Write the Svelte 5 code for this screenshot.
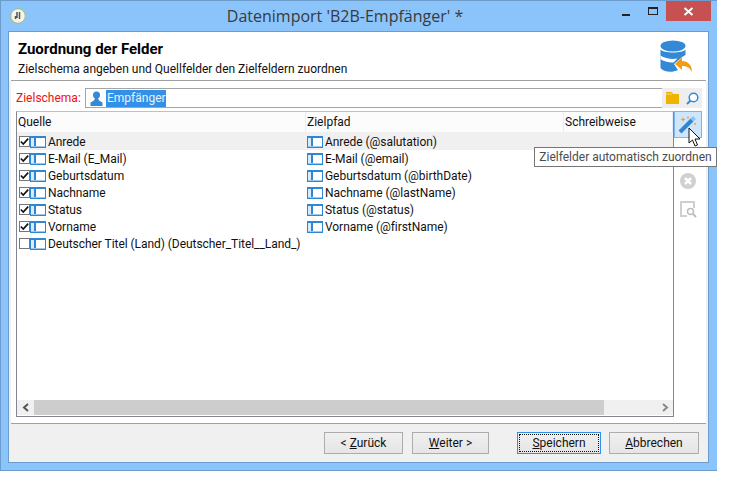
<script>
	const rows = [
		{ source: 'Anrede', target: 'Anrede (@salutation)', checked: true, active: true },
		{ source: 'E-Mail (E_Mail)', target: 'E-Mail (@email)', checked: true },
		{ source: 'Geburtsdatum', target: 'Geburtsdatum (@birthDate)', checked: true },
		{ source: 'Nachname', target: 'Nachname (@lastName)', checked: true },
		{ source: 'Status', target: 'Status (@status)', checked: true },
		{ source: 'Vorname', target: 'Vorname (@firstName)', checked: true },
		{ source: 'Deutscher Titel (Land) (Deutscher_Titel__Land_)', target: '', checked: false }
	];
</script>

{#snippet fieldIcon()}
	<svg class="field-icon" width="16" height="12" viewBox="0 0 16 12" aria-hidden="true">
		<rect x="0" y="0" width="16" height="12" fill="#2f86d4" />
		<rect x="1" y="2" width="3" height="8" fill="#dcebf9" />
		<rect x="6" y="2" width="9" height="8" fill="#fff" />
		<rect x="1" y="10" width="14" height="1" fill="#9cc7ec" />
	</svg>
{/snippet}

<div class="window">
	<header class="titlebar">
		<span class="app-icon">
			<svg width="16" height="16" viewBox="0 0 16 16" aria-hidden="true">
				<circle cx="8" cy="8" r="7.3" fill="#f4f4ea" stroke="#a5bd6a" />
				<path d="M7 4v6M9.500 4v7M5.500 8v3" stroke="#555" stroke-width="1.500" fill="none" />
			</svg>
		</span>
		<span class="title">Datenimport 'B2B-Empfänger' *</span>
		<div class="controls">
			<span class="minimize"></span>
			<span class="maximize"></span>
			<span class="close">
				<svg width="11" height="9" viewBox="0 0 11 9" aria-hidden="true">
					<path d="M1.500 1l8 7M9.500 1l-8 7" stroke="#fff" stroke-width="2" fill="none" />
				</svg>
			</span>
		</div>
	</header>

	<div class="dialog">
		<section class="head">
			<div>
				<h1>Zuordnung der Felder</h1>
				<p>Zielschema angeben und Quellfelder den Zielfeldern zuordnen</p>
			</div>
			<svg class="db-icon" width="34" height="34" viewBox="0 0 34 34" aria-hidden="true">
				<ellipse cx="13" cy="6" rx="12.500" ry="5.500" fill="#3389d6" />
				<path d="M.5 9.500C3 13.500 23 13.500 25.500 9.500V15L22 17l-8 7L18 30C12 33 3 32 .5 28Z" fill="#3389d6" />
				<path d="M.5 15.500c4 3 12 4 17 3l-4 4C8 22.500 3 21 .5 19Z" fill="#fff" />
				<path d="M15 24l7-7v4c6 0 10 4 10 11-2-4-5-6-10-6v4z" fill="#f39c12" />
			</svg>
		</section>

		<section class="form">
			<div class="schema">
				<span class="schema-label">Zielschema:</span>
				<div class="schema-input">
					<svg width="13" height="15" viewBox="0 0 13 15" aria-hidden="true">
						<circle cx="6.500" cy="4" r="3.500" fill="#3389d6" />
						<path d="M5 7h3l1 2.500 3.500 2V15H.5v-3.500L4 9.500z" fill="#3389d6" />
					</svg>
					<span class="selected">Empfänger</span>
				</div>
				<div class="schema-actions">
					<svg width="13" height="12" viewBox="0 0 13 12" aria-hidden="true">
						<path d="M0 0h6l1 2h6v10H0z" fill="#f0b400" />
						<rect x="0" y="1.500" width="6" height="1" fill="#f7d87a" />
					</svg>
					<svg width="13" height="13" viewBox="0 0 13 13" aria-hidden="true">
						<circle cx="7.500" cy="5.500" r="4.300" fill="#fff" stroke="#3389d6" stroke-width="1.500" />
						<path d="M4.500 8.500L1 12" stroke="#3389d6" stroke-width="2" />
					</svg>
				</div>
			</div>

			<div class="workspace">
				<div class="table">
					<div class="table-head">
						<span>Quelle</span>
						<span>Zielpfad</span>
						<span>Schreibweise</span>
					</div>
					<div class="table-body">
						{#each rows as row}
							<div class="row" class:active={row.active}>
								<span class="cell">
									<span class="checkbox">
										{#if row.checked}
											<svg width="11" height="9" viewBox="0 0 11 9" aria-hidden="true">
												<path d="M1 4.500l3 3 6-6.500" stroke="#111" stroke-width="2" fill="none" />
											</svg>
										{/if}
									</span>
									{@render fieldIcon()}
									<span class="label">{row.source}</span>
								</span>
								<span class="cell target">
									{#if row.target}
										{@render fieldIcon()}
										<span class="label">{row.target}</span>
									{/if}
								</span>
								<span></span>
							</div>
						{/each}
					</div>
					<div class="scrollbar">
						<span class="arrow">
							<svg width="8" height="9" viewBox="0 0 8 9" aria-hidden="true">
								<path d="M6 1L2 4.500 6 8" stroke="#555" stroke-width="2" fill="none" />
							</svg>
						</span>
						<span class="thumb"></span>
						<span class="arrow end">
							<svg width="8" height="9" viewBox="0 0 8 9" aria-hidden="true">
								<path d="M2 1l4 3.500L2 8" stroke="#888" stroke-width="2" fill="none" />
							</svg>
						</span>
					</div>
				</div>

				<div class="side">
					<button type="button" class="tool hot" aria-label="Zielfelder automatisch zuordnen">
						<svg width="20" height="20" viewBox="0 0 20 20" aria-hidden="true">
							<path d="M2 17L14 5" stroke="#2f86d4" stroke-width="4" />
							<path d="M14 5l2.500-2.500" stroke="#8cc4f0" stroke-width="4" />
							<path d="M5 2l.7 1.800L7.500 4.500l-1.800.7L5 7l-.7-1.800L2.500 4.500l1.800-.7z" fill="#f0a020" />
							<circle cx="10" cy="2.500" r="1" fill="#f0a020" />
							<circle cx="17" cy="9" r="1" fill="#f0a020" />
						</svg>
					</button>
					<span class="tool hidden-tool">
						<svg width="14" height="8" viewBox="0 0 14 8" aria-hidden="true"><rect x="2" y="0" width="10" height="6" fill="#3389d6" /></svg>
					</span>
					<span class="tool">
						<svg width="16" height="16" viewBox="0 0 16 16" aria-hidden="true">
							<circle cx="8" cy="8" r="8" fill="#d0d0d0" />
							<path d="M5 5l6 6M11 5l-6 6" stroke="#fff" stroke-width="2.500" />
						</svg>
					</span>
					<span class="tool">
						<svg width="17" height="17" viewBox="0 0 17 17" aria-hidden="true">
							<path d="M14 7V1H1v14h6" fill="none" stroke="#cfcfcf" stroke-width="2" />
							<circle cx="10.500" cy="10.500" r="3" fill="none" stroke="#bdbdbd" stroke-width="1.500" />
							<path d="M13 13l3 3" stroke="#bdbdbd" stroke-width="2" />
						</svg>
					</span>
				</div>
			</div>
		</section>

		<footer class="footer">
			<button type="button" class="btn back">&lt; <u>Z</u>urück</button>
			<button type="button" class="btn next"><u>W</u>eiter &gt;</button>
			<button type="button" class="btn save"><span class="focus"><span><u>S</u>peichern</span></span></button>
			<button type="button" class="btn cancel"><u>A</u>bbrechen</button>
		</footer>
	</div>

	<div class="tooltip">Zielfelder automatisch zuordnen</div>
	<svg class="cursor" width="14" height="21" viewBox="0 0 14 21" aria-hidden="true">
		<path d="M1 1v15l3.500-3 2.500 6 2.500-1-2.500-6H12z" fill="#fff" stroke="#111" stroke-width="1" />
	</svg>
</div>

<style>
	:global(body) {
		margin: 0;
		background: #fff;
	}

	.window {
		position: relative;
		box-sizing: border-box;
		width: 717px;
		height: 471px;
		display: flex;
		flex-direction: column;
		padding: 0 8px 7px 7px;
		background: #8ac4fa;
		border: 1px solid #6c9ccb;
		border-right: 0;
		font-family: Roboto, "Open Sans", sans-serif;
		font-size: 12px;
		color: #111;
	}

	.titlebar {
		position: relative;
		height: 30px;
		display: flex;
		align-items: center;
		justify-content: center;
		flex: none;
	}

	.app-icon {
		position: absolute;
		left: 2px;
		top: 7px;
		height: 16px;
	}

	.title {
		font-family: "Open Sans", sans-serif;
		font-size: 16px;
		color: #3a3a3a;
		margin-right: 27px;
	}

	.controls {
		position: absolute;
		right: -2px;
		top: 0;
		display: flex;
		align-items: flex-start;
	}

	.minimize {
		width: 8px;
		height: 2px;
		margin-top: 13px;
		margin-right: 18px;
		background: #222;
	}

	.maximize {
		box-sizing: border-box;
		width: 10px;
		height: 8px;
		margin-top: 6px;
		margin-right: 8px;
		border: 1px solid #222;
		border-top-width: 2px;
	}

	.close {
		width: 45px;
		height: 20px;
		display: flex;
		align-items: center;
		justify-content: center;
		background: #c75050;
	}

	.dialog {
		flex: 1;
		min-height: 0;
		display: flex;
		flex-direction: column;
		background: #f0f0f0;
		border: 1px solid #6c9ccb;
	}

	.head {
		height: 49px;
		flex: none;
		display: flex;
		justify-content: space-between;
		padding: 0 14px 0 9px;
		background: #fff;
		position: relative;
	}

	.head::after {
		content: "";
		position: absolute;
		left: 2px;
		right: 2px;
		bottom: 0;
		height: 1px;
		background: #a0a0a0;
	}

	h1 {
		margin: 7px 0 0;
		font-size: 15px;
		line-height: 20px;
		font-weight: 700;
		color: #000;
	}

	.head p {
		margin: 2px 0 0;
		line-height: 16px;
	}

	.db-icon {
		margin-top: 8px;
	}

	.form {
		flex: 1;
		min-height: 0;
		display: flex;
		flex-direction: column;
		background: #fff;
		padding: 7px 4px 6px 5px;
		border-bottom: 1px solid #a0a0a0;
		margin: 0 2px;
		gap: 3px;
	}

	.schema {
		height: 20px;
		flex: none;
		display: flex;
		align-items: center;
	}

	.schema-label {
		width: 69px;
		color: #f01010;
	}

	.schema-input {
		flex: 1;
		box-sizing: border-box;
		height: 20px;
		display: flex;
		align-items: center;
		gap: 3px;
		padding-left: 4px;
		border: 1px solid #a4a4a4;
		border-right: 0;
	}

	.selected {
		background: #3390e8;
		color: #e8f2fc;
		line-height: 17px;
		padding-left: 1px;
	}

	.schema-actions {
		width: 40px;
		height: 20px;
		display: flex;
		align-items: center;
		gap: 7px;
		padding-left: 4px;
		box-sizing: border-box;
		background: #eeeeee;
	}

	.workspace {
		flex: 1;
		min-height: 0;
		display: flex;
	}

	.table {
		width: 658px;
		box-sizing: border-box;
		display: flex;
		flex-direction: column;
		border: 1px solid #85858f;
		border-top-color: #c0c0c0;
	}

	.table-head {
		height: 20px;
		flex: none;
		display: grid;
		grid-template-columns: 289px 258px 1fr;
		align-items: center;
		background: #fcfcfc;
	}

	.table-head span {
		padding-left: 1px;
		height: 100%;
		line-height: 20px;
		border-right: 1px solid #e3eefa;
	}

	.table-body {
		flex: 1;
		min-height: 0;
	}

	.row {
		height: 17px;
		display: grid;
		grid-template-columns: 289px 258px 1fr;
		align-items: center;
	}

	.row.active {
		box-sizing: border-box;
		height: 18px;
		padding-top: 1px;
		background: #f0f0f0;
	}

	.cell {
		display: flex;
		align-items: center;
		min-width: 0;
		white-space: nowrap;
	}

	.cell.target {
		padding-left: 1px;
	}

	.label {
		letter-spacing: -0.05px;
	}

	.checkbox {
		box-sizing: border-box;
		width: 11px;
		height: 11px;
		margin-left: 2px;
		display: flex;
		align-items: center;
		justify-content: center;
		background: #fff;
		border: 1px solid #777;
	}

	.field-icon {
		flex: none;
		margin-right: 2px;
	}

	.scrollbar {
		height: 15px;
		flex: none;
		display: flex;
		background: #f0f0f0;
		margin-bottom: 1px;
	}

	.arrow {
		width: 17px;
		display: flex;
		align-items: center;
		justify-content: center;
	}

	.thumb {
		width: 570px;
		background: #cdcdcd;
	}

	.arrow.end {
		margin-left: auto;
	}

	.side {
		width: 28px;
		display: flex;
		flex-direction: column;
		align-items: center;
	}

	.tool {
		width: 28px;
		height: 28px;
		display: flex;
		align-items: center;
		justify-content: center;
	}

	.tool.hot {
		box-sizing: border-box;
		padding: 0;
		height: 27px;
		background: #cfe5fb;
		border: 1px solid #7fb5ea;
		margin-bottom: 1px;
	}

	.footer {
		height: 39px;
		flex: none;
		display: flex;
		align-items: center;
		padding-left: 315px;
		margin-top: -1px;
	}

	.btn {
		box-sizing: border-box;
		height: 22px;
		padding: 0;
		font: inherit;
		color: #111;
		border: 1px solid #acacac;
		background: linear-gradient(#f0f0f0, #e5e5e5);
	}

	.back {
		width: 79px;
		margin-right: 9px;
	}

	.next {
		width: 77px;
		margin-right: 28px;
	}

	.save {
		width: 84px;
		margin-right: 8px;
		padding: 1px;
		border-color: #3390e8;
	}

	.focus {
		display: flex;
		align-items: center;
		justify-content: center;
		height: 100%;
		box-sizing: border-box;
		border: 1px dotted #111;
	}

	.cancel {
		width: 90px;
	}

	.tooltip {
		position: absolute;
		left: 533px;
		top: 146px;
		box-sizing: border-box;
		width: 183px;
		height: 20px;
		line-height: 18px;
		text-align: center;
		color: #4c4c4c;
		background: #fff;
		border: 1px solid #767676;
		white-space: nowrap;
	}

	.cursor {
		position: absolute;
		left: 687px;
		top: 126px;
	}
</style>
